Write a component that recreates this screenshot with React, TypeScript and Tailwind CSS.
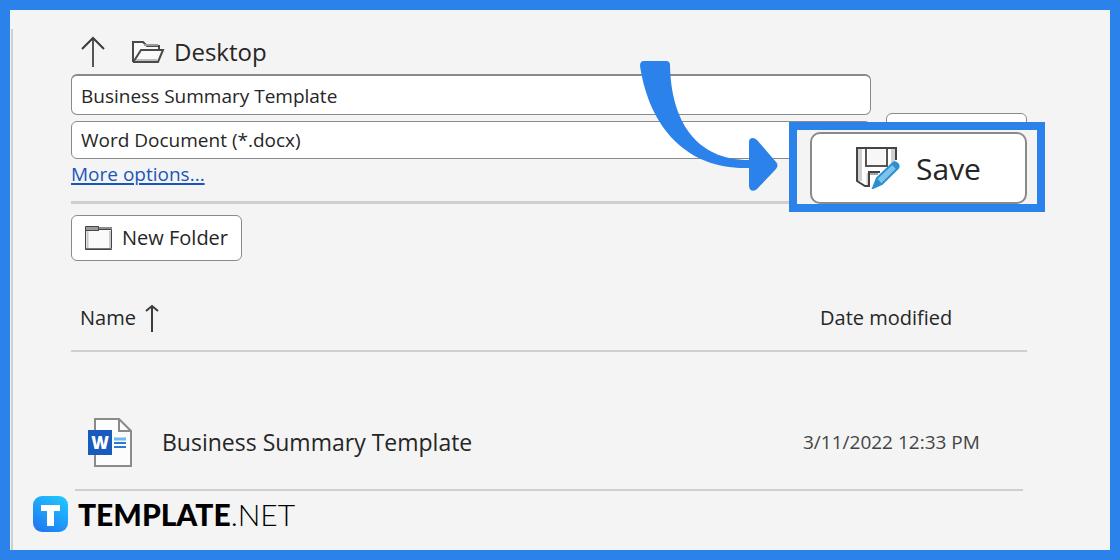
import React, { useState } from 'react';

interface FileItem {
  name: string;
  modified: string;
}

const files: FileItem[] = [
  { name: 'Business Summary Template', modified: '3/11/2022 12:33 PM' },
];

const UpArrowIcon = () => (
  <svg width="24" height="32" viewBox="0 0 24 32" fill="none" stroke="#3b3b3b" strokeWidth="2">
    <path d="M12 31V2" stroke="#555" />
    <path d="M1 13L12 2l11 11" />
  </svg>
);

const SortArrowIcon = () => (
  <svg width="14" height="28" viewBox="0 0 14 28" fill="none" stroke="#3b3b3b" strokeWidth="2">
    <path d="M7 28V2" />
    <path d="M1 7l6-5 6 5" />
  </svg>
);

const OpenFolderIcon = () => (
  <svg width="34" height="24" viewBox="0 0 34 24" fill="none" stroke="#4a4a4a" strokeWidth="2">
    <path d="M2 22V2h10l4 4h12v4" fill="#fafafa" />
    <path d="M13 5h14" stroke="#9a9a9a" />
    <path d="M3 21L10 10h22l-5 12H2" fill="#fafafa" />
    <path d="M5 20h21" stroke="#bdbdbd" />
  </svg>
);

const FolderIcon = () => (
  <svg width="28" height="24" viewBox="0 0 28 24" fill="none">
    <path d="M1 3h26v20H1z" fill="#fafafa" />
    <path d="M2.5 5v17M25 5v17" stroke="#c9c9c9" strokeWidth="2" />
    <path d="M14 2h13" stroke="#8c8c8c" strokeWidth="2" />
    <path d="M1 0h13v4H1z" fill="#9a9a9a" />
    <path d="M.5 .5h13v3h13v20H.5z" stroke="#444" />
    <path d="M1 4.5h13" stroke="#4a4a4a" />
    <path d="M1 22.5h26" stroke="#777" />
  </svg>
);

const SaveIcon = () => (
  <svg width="44" height="42" viewBox="0 0 44 42" fill="none">
    <path d="M1 1h40v14L24 40H11L1 34z" fill="#fff" />
    <path d="M4 2v32M37 2v14" stroke="#d0d0d0" strokeWidth="4" />
    <path d="M12 2h17v16H12z" fill="#f7f7f7" />
    <path d="M12 26v14" stroke="#d0d0d0" strokeWidth="3" />
    <path d="M40 13V1H1v33l8 5h4V25h11" stroke="#444" strokeWidth="2" />
    <path d="M10 2v17h21V2" stroke="#555" strokeWidth="2" />
    <path d="M14 27h8" stroke="#a5a5a5" strokeWidth="2" />
    <path d="M17 41l4-10L37 16c3-2 7 2 5 5L26 37z" fill="#7cc4ec" stroke="#2b8fd0" strokeWidth="2" />
    <path d="M17 41l4-10 5 6zM35 17l6 6 2-3c0-3-3-5-5-4z" fill="#2b8fd0" />
  </svg>
);

const WordIcon = () => (
  <svg width="44" height="50" viewBox="0 0 44 50" fill="none">
    <path d="M7 1h24l12 12v35H7z" fill="#fcfcfc" stroke="#8a8a88" strokeWidth="2" />
    <path d="M31 1v12h12" stroke="#8a8a88" strokeWidth="2" />
    <rect x="0" y="12" width="24" height="25" fill="#185abd" />
    <path d="M26 21h12" stroke="#6db8ee" strokeWidth="3" />
    <path d="M26 25h12M26 29h12" stroke="#2f7ad0" strokeWidth="2" />
    <text x="12" y="31" textAnchor="middle" fontFamily="Open Sans" fontWeight="800" fontSize="17" fill="#fff">W</text>
  </svg>
);

const BrandIcon = () => (
  <svg width="35" height="36" viewBox="0 0 35 36">
    <defs>
      <linearGradient id="brand" x1="0.8" y1="0" x2="0.2" y2="1">
        <stop offset="0" stopColor="#20c5ff" />
        <stop offset="1" stopColor="#1f78f0" />
      </linearGradient>
    </defs>
    <rect width="35" height="36" rx="9" fill="url(#brand)" />
    <path d="M8 9h19v6h-6v15h-7V15H8z" fill="#fff" />
  </svg>
);

const CurvedArrow = () => (
  <svg
    width="138"
    height="130"
    viewBox="0 0 138 130"
    fill="#2b82ea"
    className="absolute right-[249px] top-[-13px] pointer-events-none"
  >
    <path d="M4 0H26q4 0 4 4C31 60 56 99 109 99V81c0-5 5-5 8-2l19 22q3 3 0 7l-19 20c-3 3-8 2-8-3v-18C50 109 10 70 0 5Q0 0 4 0z" />
  </svg>
);

export default function App() {
  const [fileName, setFileName] = useState('Business Summary Template');

  return (
    <div className="min-h-screen flex flex-col bg-[#f4f4f4] border-[10px] border-[#2b82ea] font-['Open_Sans',sans-serif] text-[#262626]">
      <div className="flex-1 flex flex-col mt-[19px] ml-px border-l-2 border-[#cfcfcf]">
        <main className="pl-[58px] pr-[83px]">
          {/* Location */}
          <div className="flex items-center h-[45px] pl-[10px]">
            <button type="button" aria-label="Up one level">
              <UpArrowIcon />
            </button>
            <button type="button" className="flex items-center gap-[9px] ml-[26px] text-2xl">
              <OpenFolderIcon />
              Desktop
            </button>
          </div>

          {/* File name, type and save */}
          <form className="relative flex gap-[15px]" onSubmit={(e) => e.preventDefault()}>
            <div className="flex-1 flex flex-col gap-[6px]">
              <input
                type="text"
                aria-label="File name"
                value={fileName}
                onChange={(e) => setFileName(e.target.value)}
                className="w-full h-[41px] px-[9px] pt-[2px] text-[19px] bg-white border border-t-2 border-[#8a8a8a] rounded-md"
              />
              <select
                aria-label="File type"
                className="w-full h-[38px] px-[9px] text-[19px] bg-white border border-[#8a8a8a] rounded-md appearance-none"
              >
                <option>Word Document (*.docx)</option>
              </select>
            </div>
            <div className="relative w-[141px] pt-[39px]">
              <div className="h-[46px] bg-white border border-[#8a8a8a] rounded-md" />
              {/* Enlarged save button */}
              <div className="absolute right-[-18px] top-12 z-10 w-[256px] pl-[13px] pr-[10px] pt-[2px] bg-[#f4f4f4] border-8 border-[#2b82ea]">
                <button
                  type="submit"
                  className="flex items-center justify-center gap-4 w-full h-[72px] text-[30px] bg-white border-2 border-[#8a8a8a] rounded-[10px]"
                >
                  <SaveIcon />
                  Save
                </button>
              </div>
            </div>
            <CurvedArrow />
          </form>

          <div className="h-[45px] border-b-[3px] border-[#cfcfcf]">
            <a href="#more" className="text-[19px] leading-[30px] text-[#1a56b8] underline decoration-2 underline-offset-2">
              More options...
            </a>
          </div>

          <button
            type="button"
            className="flex items-center gap-[9px] mt-[11px] h-[46px] px-[13px] text-xl bg-white border border-[#8a8a8a] rounded-md"
          >
            <FolderIcon />
            New Folder
          </button>

          {/* File list */}
          <table className="w-full mt-6 text-left">
            <thead>
              <tr className="h-[66px] border-b-2 border-[#cfcfcf] text-xl">
                <th className="pl-[9px] font-normal">
                  <span className="flex items-center gap-[9px]">
                    Name
                    <SortArrowIcon />
                  </span>
                </th>
                <th className="w-[224px] pl-[17px] font-normal">Date modified</th>
              </tr>
            </thead>
            <tbody>
              {files.map((file) => (
                <tr key={file.name} className="h-[138px]">
                  <td className="pl-[17px] pt-11">
                    <span className="flex items-center gap-[30px] text-[23px]">
                      <WordIcon />
                      {file.name}
                    </span>
                  </td>
                  <td className="pt-11 text-[19px] text-[#444]">{file.modified}</td>
                </tr>
              ))}
            </tbody>
          </table>
          <div className="mx-1 border-b-2 border-[#cfcfcf]" />
        </main>

        <footer className="flex items-center gap-[10px] pl-5 pt-[5px] font-['Lato',sans-serif] text-[30px] leading-9 text-black">
          <BrandIcon />
          <span>
            <b className="font-black">TEMPLATE</b>
            <span className="font-light">.NET</span>
          </span>
        </footer>
      </div>
    </div>
  );
}
